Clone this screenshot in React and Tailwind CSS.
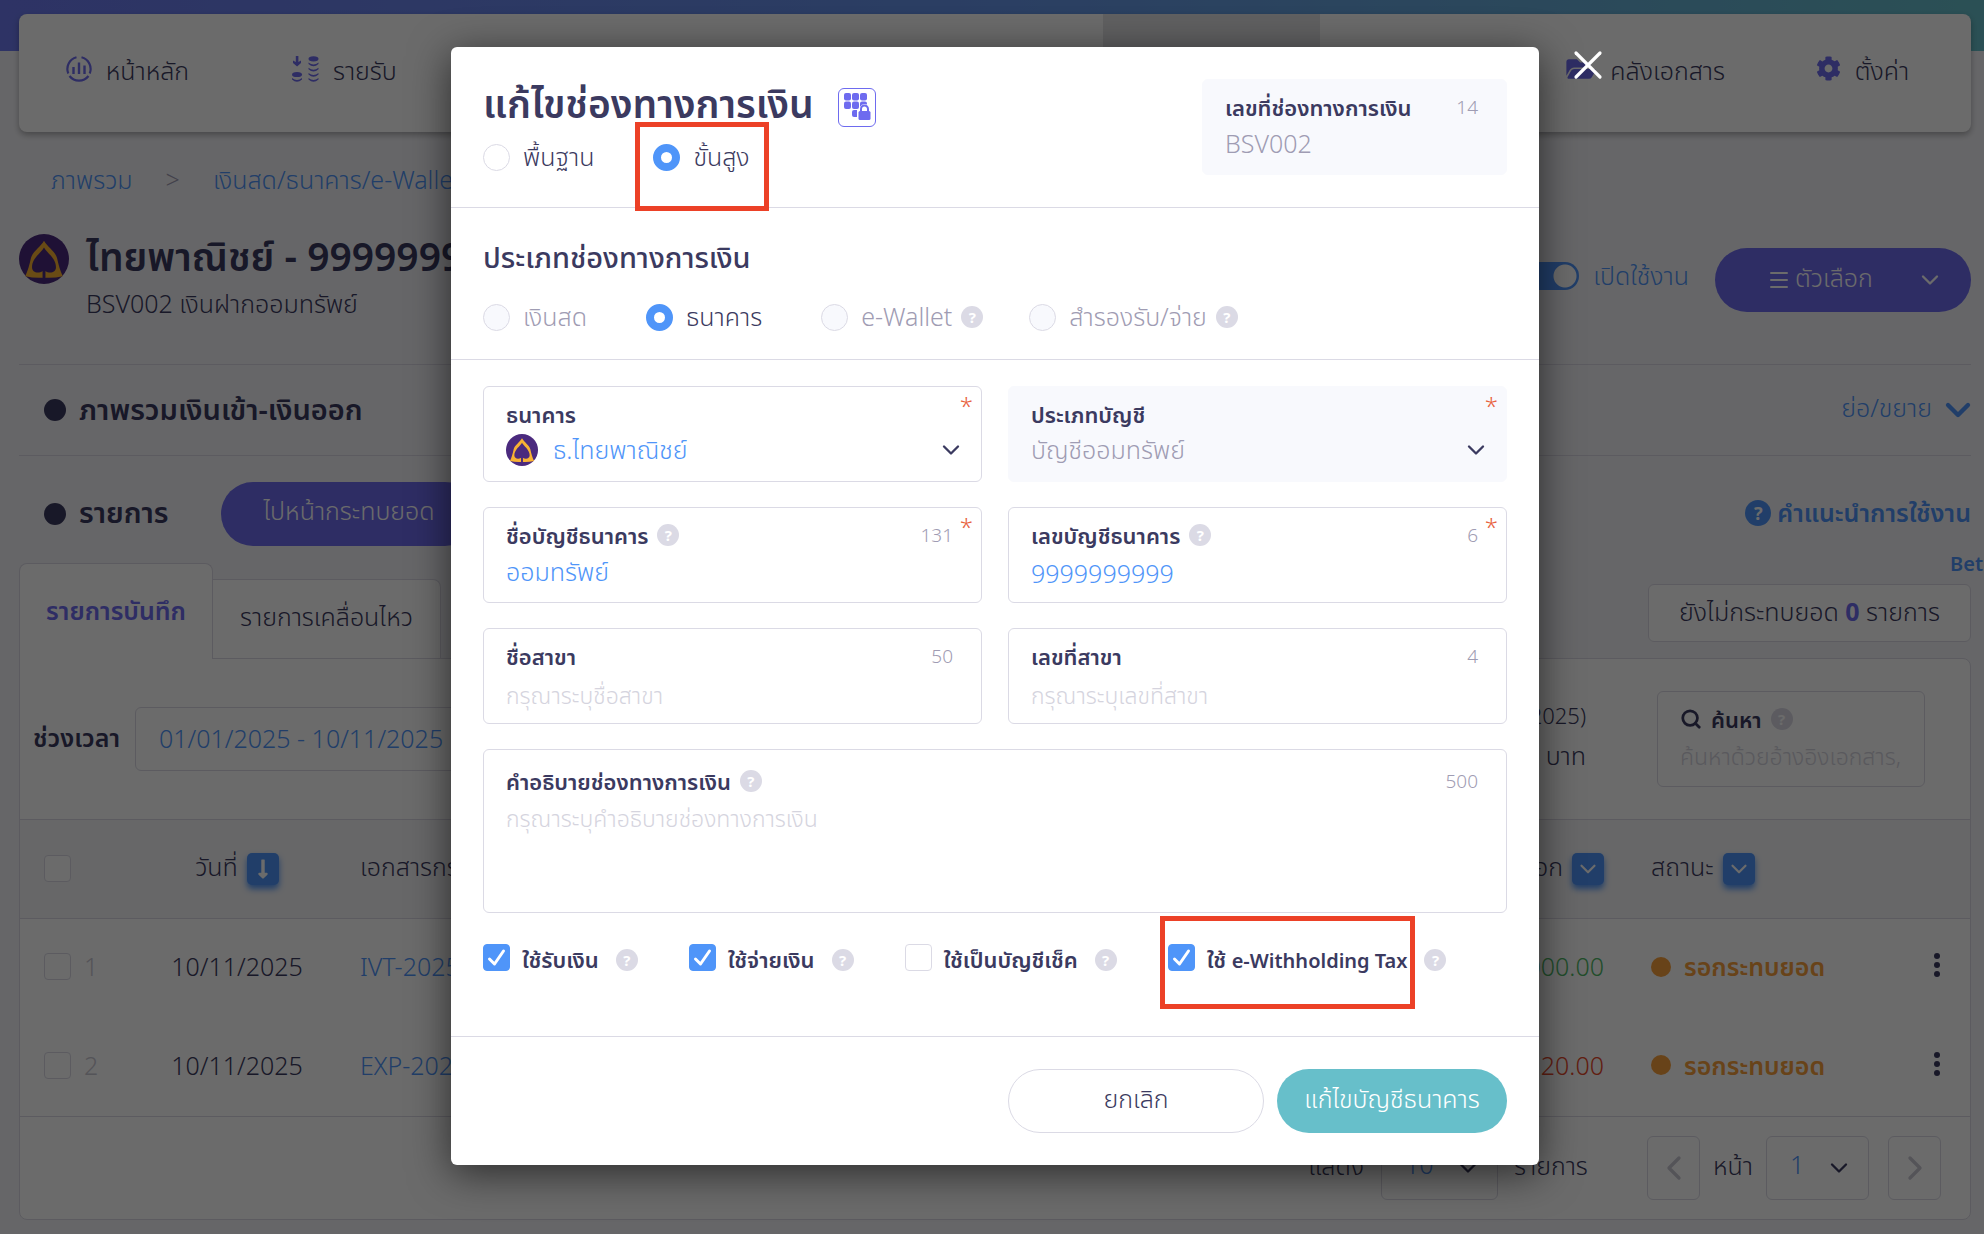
import React from 'react';
import clsx from 'clsx';
import { ChevronDown, ChevronLeft, ChevronRight, Menu, X } from 'lucide-react';
import { FaCog, FaFolderOpen, FaLongArrowAltDown } from 'react-icons/fa';
import { FiSearch } from 'react-icons/fi';

const HomeIcon = () => (
  <svg className="h-[26px] w-[26px]" viewBox="0 0 26 26" fill="none" stroke="currentColor" strokeWidth="2.2">
    <path d="M10.500 1.300A12 12 0 0 0 2.300 17.500" />
    <path d="M15.500 1.300A12 12 0 0 1 23.700 17.500" />
    <path d="M3.500 20a12 12 0 0 0 19 0" />
    <path d="M7.500 11v7M13 6.500v11.500M18.500 9.500v8.500" strokeWidth="2.4" />
  </svg>
);

const IncomeIcon = () => (
  <svg className="h-[26px] w-[27px]" viewBox="0 0 27 26" fill="currentColor">
    <path d="M3.800 0h2.600v6L9 4.500V7L5.100 10.500 1 7V4.500L3.800 6z" />
    <ellipse cx="5" cy="18.500" rx="5" ry="2.600" />
    <path d="M0 22q5 4 10 0v1.500q-5 4.500-10 0z" />
    <ellipse cx="21.500" cy="2.800" rx="5" ry="2.600" />
    <path d="M16.500 6.500q5 4 10 0V8q-5 4.500-10 0zM16.500 11.700q5 4 10 0v1.500q-5 4.500-10 0zM16.500 16.900q5 4 10 0v1.500q-5 4.500-10 0zM16.500 22q5 4 10 0v1.500q-5 4.500-10 0z" />
  </svg>
);

const BankLogo = ({ className }) => (
  <svg className={clsx('shrink-0', className)} viewBox="0 0 48 48">
    <circle cx="24" cy="24" r="24" fill="#4b2a7e" />
    <path d="M24 6.500C21 12 13 17 11.500 23C10 30 8.500 35 6 40.500Q14 42.500 22.800 42V35h2.400v7Q34 42.500 42 40.500C39.500 35 38 30 36.500 23C35 17 27 12 24 6.500z" fill="#f9b233" />
    <path d="M24 13C21.500 18 12.500 23 12.500 32C12.500 37 18.500 38.500 22.800 35.500V42h2.400V35.500C29.500 38.500 35.500 37 35.500 32C35.500 23 26.500 18 24 13z" fill="#4b2a7e" />
  </svg>
);

const KeypadLockIcon = () => (
  <svg className="h-[28px] w-[28px]" viewBox="0 0 28 28" fill="#6e6bef">
    <rect x="1" y="0" width="7" height="7.500" rx="2" />
    <rect x="9" y="0" width="7" height="7.500" rx="2" />
    <rect x="17" y="0" width="7" height="7.500" rx="2" />
    <rect x="1" y="8.500" width="7" height="7.500" rx="2" />
    <rect x="9" y="8.500" width="7" height="7.500" rx="2" />
    <path d="M17 10.500q0-2 2-2h3q2 0 2 2v1q-5-1.500-7 2.500z" />
    <path d="M9 19q0-2 2-2h3v7h-3q-2 0-2-2z" />
    <path d="M18 18.500v-2.500a3.500 3.500 0 0 1 7 0v2.500" fill="none" stroke="#6e6bef" strokeWidth="2" />
    <rect x="15.500" y="18" width="12" height="9" rx="1.500" />
  </svg>
);

const Help = () => (
  <span className="inline-flex h-[22px] w-[22px] shrink-0 items-center justify-center rounded-full bg-[#dbdae5] text-[15px] font-bold leading-none text-white">
    ?
  </span>
);

const navItems = [
  { name: 'หน้าหลัก', label: 'หน้าหลัก', icon: <HomeIcon /> },
  { name: 'รายรับ', label: 'รายรับ', icon: <IncomeIcon /> },
  { name: 'รายจ่าย' },
  { name: 'ผู้ติดต่อ' },
  { name: 'สินค้า' },
  { name: 'การเงิน', active: true },
  { name: 'บัญชี' },
  { name: 'คลังเอกสาร', label: 'คลังเอกสาร', icon: <FaFolderOpen className="h-[26px] w-[30px]" /> },
  { name: 'ตั้งค่า', label: 'ตั้งค่า', icon: <FaCog className="h-[25px] w-[25px]" /> },
];

const rows = [
  { no: 1, date: '10/11/2025', doc: 'IVT-20251', amount: '1,000.00', color: 'text-[#4fb866]' },
  { no: 2, date: '10/11/2025', doc: 'EXP-20251', amount: '20.00', color: 'text-[#e8492b]' },
];

const Box = ({ label }) => (
  <input
    type="checkbox"
    aria-label={label}
    className="h-[27px] w-[27px] appearance-none rounded-[4px] border border-[#dbdae5] bg-white align-middle"
  />
);

const HeaderButton = ({ label, children }) => (
  <button
    aria-label={label}
    className="flex h-[32px] w-[32px] items-center justify-center rounded-[5px] bg-[#4f95f9] text-white shadow-[0_4px_6px_#4f95f9]"
  >
    {children}
  </button>
);

const TopNav = () => (
  <header className="bg-[linear-gradient(90deg,#6e7af0,#6796ec_50%,#67bfca)] bg-[length:100%_51px] bg-no-repeat pt-[14px] pr-[13px] pl-[19px]">
    <nav className="grid h-[118px] grid-cols-9 overflow-hidden rounded-[8px] bg-white shadow-[0_3px_6px_rgba(0,0,0,0.3)]">
      {navItems.map((item) => (
        <a
          key={item.name}
          href="#"
          aria-label={item.name}
          className={clsx('flex items-start justify-center gap-[14px] pt-[36px]', item.active && 'bg-[#e4e4e6]')}
        >
          <span className="mt-[6px] text-[#6e6bef]">{item.icon}</span>
          <span className="leading-[40px]">{item.label}</span>
        </a>
      ))}
    </nav>
  </header>
);

const Picker = ({ id, value, className }) => (
  <div className={clsx('relative', className)}>
    <select id={id} className="h-[64px] w-full appearance-none rounded-[6px] border border-[#dbdae5] bg-white px-[23px] pb-[6px] text-[#4f95f9]">
      <option>{value}</option>
    </select>
    <ChevronDown className="pointer-events-none absolute top-[18px] right-[16px] h-[28px] w-[28px]" />
  </div>
);

const Transactions = () => (
  <div className="rounded-b-[8px] rounded-tr-[8px] border border-[#dbdae5] bg-white">
    <div className="flex h-[160px] items-start">
      <label htmlFor="range" className="mt-[48px] ml-[13px] w-[102px] pb-[4px] text-[25px] leading-[60px] font-semibold">
        ช่วงเวลา
      </label>
      <input
        id="range"
        defaultValue="01/01/2025 - 10/11/2025"
        className="mt-[48px] h-[64px] w-[380px] rounded-[6px] border border-[#dbdae5] px-[23px] pb-[2px] text-[#4f95f9]"
      />
      <div className="mt-[36px] ml-auto text-right">
        <p className="text-[22px] leading-[40px]">11/2025)</p>
        <p className="leading-[40px]">0.00 บาท</p>
      </div>
      <div className="mt-[32px] mr-[45px] ml-[71px] h-[96px] w-[268px] rounded-[6px] border border-[#dbdae5] px-[22px] pt-[12px]">
        <label htmlFor="search" className="flex items-center gap-[9px] text-[22px] leading-[30px] font-semibold">
          <FiSearch className="h-[22px] w-[22px]" strokeWidth="3" />
          ค้นหา
          <Help />
        </label>
        <input
          id="search"
          placeholder="ค้นหาด้วยอ้างอิงเอกสาร,"
          className="h-[44px] w-full text-[23px] placeholder:text-[#d5d4de]"
        />
      </div>
    </div>
    <table className="w-full table-fixed">
      <thead className="border-y border-[#dbdae5] bg-[#f5f5f7]">
        <tr className="h-[99px]">
          <th className="w-[122px] pb-[6px] pl-[24px] text-left align-middle"><Box label="เลือกทั้งหมด" /></th>
          <th className="w-[190px] font-[350]">
            <div className="flex items-center justify-center gap-[9px]">
              <span className="pb-[4px]">วันที่</span>
              <HeaderButton label="เรียงวันที่"><FaLongArrowAltDown className="h-[22px] w-[22px]" /></HeaderButton>
            </div>
          </th>
          <th className="pb-[4px] pl-[28px] text-left font-[350]">เอกสารกระทบยอด</th>
          <th className="font-[350]">
            <div className="flex items-center justify-end gap-[9px]">
              <span className="pb-[4px]">จำนวนเงินเข้า/ออก</span>
              <HeaderButton label="กรองจำนวนเงิน"><ChevronDown className="h-[26px] w-[26px]" /></HeaderButton>
            </div>
          </th>
          <th className="w-[300px] pl-[47px] font-[350]">
            <div className="flex items-center gap-[9px]">
              <span className="pb-[4px]">สถานะ</span>
              <HeaderButton label="กรองสถานะ"><ChevronDown className="h-[26px] w-[26px]" /></HeaderButton>
            </div>
          </th>
          <th className="w-[66px]" />
        </tr>
      </thead>
      <tbody className="border-b border-[#dbdae5]">
        {rows.map((row) => (
          <tr key={row.no} className="h-[99px]">
            <td className="pb-[3px] pl-[24px] text-[#c9c8d2]">
              <div className="flex items-center gap-[13px]">
                <Box label={`เลือกรายการ ${row.no}`} />
                {row.no}
              </div>
            </td>
            <td className="pb-[3px] text-center">{row.date}</td>
            <td className="pb-[3px] pl-[28px]"><a href="#" className="text-[#4f95f9]">{row.doc}</a></td>
            <td className={clsx('pb-[3px] text-right', row.color)}>{row.amount}</td>
            <td className="pb-[3px] pl-[47px] font-semibold text-[#f8a03c]">
              <div className="flex items-center gap-[13px]">
                <span className="h-[20px] w-[20px] rounded-full bg-[#f8a03c]" />
                รอกระทบยอด
              </div>
            </td>
            <td className="pb-[6px]">
              <button aria-label="เมนูรายการ" className="mx-auto flex flex-col gap-[3px]">
                <span className="h-[6px] w-[6px] rounded-full bg-[#3b3a60]" />
                <span className="h-[6px] w-[6px] rounded-full bg-[#3b3a60]" />
                <span className="h-[6px] w-[6px] rounded-full bg-[#3b3a60]" />
              </button>
            </td>
          </tr>
        ))}
      </tbody>
    </table>
    <div className="flex h-[102px] items-center justify-end pr-[29px]">
      <label htmlFor="per-page" className="pb-[4px]">แสดง</label>
      <Picker id="per-page" value="10" className="ml-[17px] w-[117px]" />
      <span className="ml-[16px] w-[133px] pb-[4px]">รายการ</span>
      <button aria-label="ก่อนหน้า" className="flex h-[64px] w-[53px] items-center justify-center rounded-[6px] border border-[#dbdae5] text-[#c9c8d2]">
        <ChevronLeft className="h-[40px] w-[40px]" />
      </button>
      <label htmlFor="page" className="ml-[13px] pb-[4px]">หน้า</label>
      <Picker id="page" value="1" className="ml-[13px] w-[103px]" />
      <button aria-label="ถัดไป" className="ml-[19px] flex h-[64px] w-[53px] items-center justify-center rounded-[6px] border border-[#dbdae5] text-[#c9c8d2]">
        <ChevronRight className="h-[40px] w-[40px]" />
      </button>
    </div>
  </div>
);

const BankPage = () => (
  <div>
    <TopNav />
    <main className="pr-[13px] pl-[19px]">
      <div className="flex h-[96px] items-center gap-[33px] pl-[32px] text-[#4f95f9]">
        <a href="#">ภาพรวม</a>
        <span className="text-[#9f9cb3]">&gt;</span>
        <a href="#">เงินสด/ธนาคาร/e-Wallet</a>
      </div>

      <div className="flex h-[137px] items-start border-b border-[#dbdae5]">
        <BankLogo className="mt-[6px] h-[50px] w-[50px]" />
        <div className="ml-[17px]">
          <h1 className="text-[39px] leading-[56px] font-semibold">ไทยพาณิชย์ - 9999999999</h1>
          <p className="leading-[38px]">BSV002 เงินฝากออมทรัพย์</p>
        </div>
        <label className="mt-[20px] ml-auto flex h-[56px] items-center gap-[14px] text-[#4f95f9]">
          <input
            type="checkbox"
            role="switch"
            defaultChecked
            className="h-[28px] w-[56px] appearance-none rounded-full bg-[#4f95f9] bg-[radial-gradient(circle_at_42px_14px,white_11px,transparent_12px)]"
          />
          เปิดใช้งาน
        </label>
        <button className="mt-[20px] ml-[26px] flex h-[64px] w-[256px] items-center rounded-full bg-[#6e6bef] pr-[27px] pl-[52px] text-white">
          <Menu className="mr-[4px] h-[24px] w-[24px]" />
          <span className="pb-[4px]">ตัวเลือก</span>
          <ChevronDown className="ml-auto h-[28px] w-[28px]" />
        </button>
      </div>

      <div className="flex h-[91px] items-center border-b border-[#dbdae5] pl-[25px]">
        <span className="mr-[13px] h-[22px] w-[22px] rounded-full bg-[#3b3a60]" />
        <h2 className="pb-[2px] text-[29px] font-semibold">ภาพรวมเงินเข้า-เงินออก</h2>
        <button className="-mr-[7px] ml-auto flex items-center gap-[6px] text-[#4f95f9]">
          <span className="pb-[4px]">ย่อ/ขยาย</span>
          <ChevronDown className="h-[40px] w-[40px]" strokeWidth="2.6" />
        </button>
      </div>

      <div className="flex items-center pt-[26px] pb-[17px] pl-[25px]">
        <span className="mr-[13px] h-[22px] w-[22px] rounded-full bg-[#3b3a60]" />
        <h2 className="w-[142px] pb-[4px] text-[29px] font-semibold">รายการ</h2>
        <button className="h-[64px] w-[256px] rounded-full bg-[#6e6bef] pb-[6px] text-white">ไปหน้ากระทบยอด</button>
        <a href="#" className="ml-auto flex items-center gap-[6px] pb-[2px] font-semibold text-[#4f95f9]">
          <span className="flex h-[26px] w-[26px] items-center justify-center rounded-full bg-[#4f95f9] text-[18px] leading-none font-bold text-white">?</span>
          คำแนะนำการใช้งาน
        </a>
      </div>

      <div className="relative z-10 -mb-px flex items-end">
        <button className="h-[96px] w-[194px] rounded-t-[8px] border border-b-0 border-[#dbdae5] bg-white pb-[2px] font-semibold text-[#6e6bef]">
          รายการบันทึก
        </button>
        <button className="h-[80px] w-[228px] rounded-tr-[8px] border border-l-0 border-[#dbdae5] bg-white pb-[4px]">รายการเคลื่อนไหว</button>
        <div className="relative mb-[17px] ml-auto">
          <span className="absolute -top-[35px] -right-[12px] text-[20px] font-semibold text-[#4f95f9]">Bet</span>
          <button className="h-[58px] w-[323px] rounded-[6px] border border-[#dbdae5] bg-white pb-[2px]">
            ยังไม่กระทบยอด <span className="font-bold text-[#6e6bef]">0</span> รายการ
          </button>
        </div>
      </div>

      <Transactions />
    </main>
  </div>
);

const Radio = ({ name, label, help, disabled, marked, checked }) => (
  <label className={clsx('relative flex h-[40px] items-center', disabled && 'text-[#9f9cb3]')}>
    <input
      type="radio"
      name={name}
      disabled={disabled}
      defaultChecked={checked}
      className="mr-[13px] h-[27px] w-[27px] appearance-none rounded-full border border-[#dbdae5] bg-white checked:border-[8px] checked:border-[#4f95f9] disabled:bg-[#f8f9fd]"
    />
    {label}
    {help && <span className="-mr-[13px] ml-[9px] flex"><Help /></span>}
    {marked && <span className="absolute -top-[15px] -right-[19px] -bottom-[34px] -left-[18px] border-[5px] border-[#ec4127]" />}
  </label>
);

const Check = ({ label, marked, checked }) => (
  <div className="flex h-[40px] items-center">
    <label className="relative flex h-[40px] items-center gap-[12px] text-[22px] font-semibold">
      <span className="relative flex">
        <input
          type="checkbox"
          defaultChecked={checked}
          className="peer h-[27px] w-[27px] appearance-none rounded-[4px] border border-[#dbdae5] bg-white checked:border-[#4f95f9] checked:bg-[#4f95f9]"
        />
        <svg className="pointer-events-none absolute inset-0 hidden h-[27px] w-[27px] peer-checked:block" viewBox="0 0 27 27" fill="none" stroke="white" strokeWidth="3" strokeLinecap="round" strokeLinejoin="round">
          <path d="M6.500 15l5 5 9-13" />
        </svg>
      </span>
      <span className="pt-[4px]">{label}</span>
      {marked && <span className="absolute -top-[21px] -right-[8px] -bottom-[32px] -left-[8px] border-[5px] border-[#ec4127]" />}
    </label>
    <span className="ml-[17px] flex pt-[6px]"><Help /></span>
  </div>
);

const Field = ({ id, label, help, limit, required, disabled, tall, children }) => (
  <div
    className={clsx(
      'relative rounded-[6px] border px-[22px] pb-[10px]',
      tall ? 'pt-[16px]' : 'pt-[12px]',
      disabled ? 'border-[#f8f9fd] bg-[#f8f9fd]' : 'border-[#dbdae5]'
    )}
  >
    <div className="flex h-[30px] items-center gap-[9px]">
      <label htmlFor={id} className="text-[22px] leading-[30px] font-semibold">{label}</label>
      {help && <Help />}
      {limit && <span className="ml-auto pr-[6px] text-[19px] text-[#9f9cb3]">{limit}</span>}
    </div>
    {children}
    {required && <span className="absolute top-[4px] right-[8px] text-[24px] leading-[30px] text-[#e8623f]">*</span>}
  </div>
);

const inputClass = 'h-[42px] w-full bg-transparent pt-[3px] text-[#4f95f9] placeholder:text-[23px] placeholder:text-[#d5d4de]';

const EditChannelModal = () => (
  <div className="absolute inset-0 z-20 flex items-start justify-center bg-[rgba(0,0,0,0.58)] pt-[47px] pl-[6px]">
    <form className="relative w-[1088px] rounded-[6px] bg-white shadow-[0_8px_40px_rgba(0,0,0,0.6)]">
      <button type="button" aria-label="ปิด" className="absolute -top-[6px] -right-[73px] text-white">
        <X className="h-[48px] w-[48px]" strokeWidth="1.6" />
      </button>

      <div className="flex h-[161px] items-start justify-between border-b border-[#dbdae5] px-[32px] pt-[32px]">
        <div>
          <div className="flex h-[58px] items-center gap-[24px] pb-[2px]">
            <h2 className="pb-[8px] text-[39px] leading-[48px] font-semibold">แก้ไขช่องทางการเงิน</h2>
            <button type="button" aria-label="ล็อก" className="flex h-[39px] w-[38px] items-center justify-center rounded-[6px] border border-[#6e6bef]">
              <KeypadLockIcon />
            </button>
          </div>
          <div className="flex gap-[59px]">
            <Radio name="mode" label="พื้นฐาน" />
            <Radio name="mode" label="ขั้นสูง" checked marked />
          </div>
        </div>
        <div className="w-[305px]">
          <Field id="code" label="เลขที่ช่องทางการเงิน" limit="14" disabled>
            <input id="code" disabled defaultValue="BSV002" className="h-[42px] w-full text-[#9f9cb3]" />
          </Field>
        </div>
      </div>

      <div className="h-[152px] border-b border-[#dbdae5] px-[32px] pt-[28px]">
        <h3 className="text-[29px] leading-[42px] font-medium">ประเภทช่องทางการเงิน</h3>
        <div className="mt-[19px] flex gap-[59px]">
          <Radio name="type" label="เงินสด" disabled />
          <Radio name="type" label="ธนาคาร" checked />
          <Radio name="type" label="e-Wallet" help disabled />
          <Radio name="type" label="สำรองรับ/จ่าย" help disabled />
        </div>
      </div>

      <div className="grid grid-cols-2 gap-x-[26px] gap-y-[25px] px-[32px] pt-[26px]">
        <Field id="bank" label="ธนาคาร" required>
          <div className="relative flex items-center">
            <BankLogo className="h-[32px] w-[32px]" />
            <select id="bank" className="h-[42px] w-full appearance-none pl-[15px] text-[#4f95f9]">
              <option>ธ.ไทยพาณิชย์</option>
            </select>
            <ChevronDown className="pointer-events-none absolute -right-[6px] h-[28px] w-[28px]" />
          </div>
        </Field>
        <Field id="acc-type" label="ประเภทบัญชี" required disabled>
          <div className="relative flex items-center">
            <select id="acc-type" disabled className="h-[42px] w-full appearance-none text-[#9f9cb3] opacity-100">
              <option>บัญชีออมทรัพย์</option>
            </select>
            <ChevronDown className="pointer-events-none absolute -right-[6px] h-[28px] w-[28px]" />
          </div>
        </Field>
        <Field id="acc-name" label="ชื่อบัญชีธนาคาร" limit="131" help required>
          <input id="acc-name" defaultValue="ออมทรัพย์" className={inputClass} />
        </Field>
        <Field id="acc-no" label="เลขบัญชีธนาคาร" limit="6" help required>
          <input id="acc-no" defaultValue="9999999999" className={inputClass} />
        </Field>
        <Field id="branch" label="ชื่อสาขา" limit="50">
          <input id="branch" placeholder="กรุณาระบุชื่อสาขา" className={inputClass} />
        </Field>
        <Field id="branch-no" label="เลขที่สาขา" limit="4">
          <input id="branch-no" placeholder="กรุณาระบุเลขที่สาขา" className={inputClass} />
        </Field>
        <div className="col-span-2">
          <Field id="desc" label="คำอธิบายช่องทางการเงิน" limit="500" help tall>
            <textarea
              id="desc"
              placeholder="กรุณาระบุคำอธิบายช่องทางการเงิน"
              className="block h-[106px] w-full resize-none pt-[5px] leading-[34px] placeholder:text-[23px] placeholder:text-[#d5d4de]"
            />
          </Field>
        </div>
      </div>

      <div className="flex h-[124px] items-start gap-[51px] border-b border-[#dbdae5] px-[32px] pt-[24px]">
        <Check label="ใช้รับเงิน" checked />
        <Check label="ใช้จ่ายเงิน" checked />
        <Check label="ใช้เป็นบัญชีเช็ค" />
        <Check label={<>ใช้ <span className="text-[20px]">e-Withholding Tax</span></>} checked marked />
      </div>

      <div className="flex justify-end gap-[13px] px-[32px] pt-[32px] pb-[32px]">
        <button type="button" className="h-[64px] w-[256px] rounded-full border border-[#dbdae5] pb-[4px]">ยกเลิก</button>
        <button type="button" className="h-[64px] w-[230px] rounded-full bg-[#67bfca] pb-[4px] text-white">แก้ไขบัญชีธนาคาร</button>
      </div>
    </form>
  </div>
);

const App = () => (
  <div className="relative min-h-screen overflow-hidden bg-[#f4f4f8] font-['Noto_Sans','Noto_Sans_Thai',sans-serif] text-[25px] font-[350] text-[#3b3a60]">
    <BankPage />
    <EditChannelModal />
  </div>
);

export default App;
